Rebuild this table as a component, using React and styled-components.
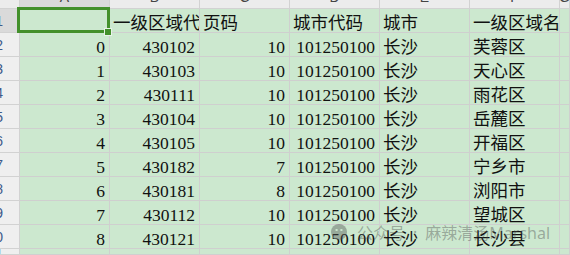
import React from 'react'
import styled, { createGlobalStyle } from 'styled-components'

const Global = createGlobalStyle`
    html, body {
        margin: 0;
        padding: 0;
        background: #ffffff;
        overflow: hidden;
    }
`

const Page = styled.div`
    position: relative;
    width: 570px;
    height: 255px;
    overflow: hidden;
`

const Sheet = styled.div`
    display: grid;
    grid-template-columns: 20px repeat(6, 90px) 1fr;
    grid-template-rows: 9px repeat(10, 24px) 1fr;
    width: 570px;
    height: 255px;
    font-family: "Liberation Serif", "Noto Sans CJK SC", serif;
    color: #111;
`

const Corner = styled.div`
    background: #ececec;
    border-right: 1px solid #d2d2d2;
    border-bottom: 1px solid #d2d2d2;
`

const ColHead = styled.div`
    background: ${p => (p.$active ? '#dadada' : '#ececec')};
    border-right: 1px solid #d2d2d2;
    border-bottom: 1px solid #d2d2d2;
    display: flex;
    align-items: flex-end;
    justify-content: center;
    overflow: hidden;
    padding-bottom: 4px;
    box-sizing: border-box;
    font-family: "Liberation Sans", sans-serif;
    font-size: 14px;
    line-height: 1;
    color: #444;
`

const RowHead = styled.div`
    background: ${p => (p.$active ? '#dadada' : '#efefef')};
    border-right: 1px solid #d2d2d2;
    border-bottom: 1px solid #d2d2d2;
    display: flex;
    align-items: center;
    justify-content: flex-end;
    overflow: hidden;
    padding-right: 16px;
    box-sizing: border-box;
    font-family: "Liberation Sans", sans-serif;
    font-size: 14px;
    color: #3d5a8a;
`

const Cell = styled.div`
    position: relative;
    background: #cce8cf;
    border-right: 1px solid #cfcfcf;
    border-bottom: 1px solid #cfcfcf;
    box-sizing: border-box;
    display: flex;
    align-items: flex-end;
    justify-content: ${p => (p.$num ? 'flex-end' : 'flex-start')};
    padding: ${p => (p.$num ? '0 4px 0 0' : '0 0 0 3px')};
    overflow: ${p => (p.$spill ? 'visible' : 'hidden')};
    z-index: ${p => (p.$spill ? 1 : 'auto')};
    white-space: nowrap;
    font-size: 17.5px;
    line-height: 1;
`

// active cell frame and its fill handle sit over the grid
const Selection = styled.div`
    position: absolute;
    left: 17px;
    top: 7px;
    width: 93px;
    height: 26px;
    box-sizing: border-box;
    border: 3px solid #43902b;
    pointer-events: none;
    z-index: 5;
`

const Handle = styled.div`
    position: absolute;
    left: 105px;
    top: 29px;
    width: 6px;
    height: 6px;
    background: #43902b;
    outline: 1px solid #e8f3e8;
    z-index: 6;
`

const Watermark = styled.div`
    position: absolute;
    left: 331px;
    top: 220px;
    display: flex;
    align-items: center;
    font-family: "Noto Sans", "Noto Sans CJK SC", sans-serif;
    font-size: 16px;
    color: rgba(80, 80, 80, 0.42);
    z-index: 4;
    pointer-events: none;

    svg {
        margin-right: 10px;
    }
`

const Dot = styled.span`
    margin: 0 8px;
`

const letters = ['A', 'B', 'C', 'D', 'E', 'F', 'G']

const header = ['', '一级区域代码', '页码', '城市代码', '城市', '一级区域名']

const rows = [
    [0, 430102, 10, 101250100, '长沙', '芙蓉区'],
    [1, 430103, 10, 101250100, '长沙', '天心区'],
    [2, 430111, 10, 101250100, '长沙', '雨花区'],
    [3, 430104, 10, 101250100, '长沙', '岳麓区'],
    [4, 430105, 10, 101250100, '长沙', '开福区'],
    [5, 430182, 7, 101250100, '长沙', '宁乡市'],
    [6, 430181, 8, 101250100, '长沙', '浏阳市'],
    [7, 430112, 10, 101250100, '长沙', '望城区'],
    [8, 430121, 10, 101250100, '长沙', '长沙县'],
]

const WeChatMark = () => (
    <svg width="16" height="16" viewBox="0 0 16 16">
        <circle cx="8" cy="8" r="8" fill="rgba(80,80,80,0.42)" />
        <ellipse cx="5.6" cy="6" rx="1.3" ry="1.1" fill="#cce8cf" />
        <ellipse cx="10.4" cy="6" rx="1.3" ry="1.1" fill="#cce8cf" />
    </svg>
)

const App = () => {
    return (
        <Page>
            <Global />
            <Sheet>
                <Corner />
                {letters.map((l, i) => (
                    <ColHead key={l} $active={i === 0}>{l}</ColHead>
                ))}

                <RowHead $active>1</RowHead>
                {header.map((h, i) => (
                    <Cell key={'h' + i} $spill={i === 5}>{h}</Cell>
                ))}
                <Cell />

                {rows.map((r, ri) => (
                    <React.Fragment key={ri}>
                        <RowHead>{ri + 2}</RowHead>
                        {r.map((v, ci) => (
                            <Cell key={ci} $num={typeof v === 'number'}>{v}</Cell>
                        ))}
                        <Cell />
                    </React.Fragment>
                ))}

                <RowHead>11</RowHead>
                {letters.map(l => <Cell key={'e' + l} />)}
            </Sheet>
            <Selection />
            <Handle />
            <Watermark>
                <WeChatMark />
                <span>公众号</span>
                <Dot>·</Dot>
                <span>麻辣清汤Marshal</span>
            </Watermark>
        </Page>
    )
}

export default App
